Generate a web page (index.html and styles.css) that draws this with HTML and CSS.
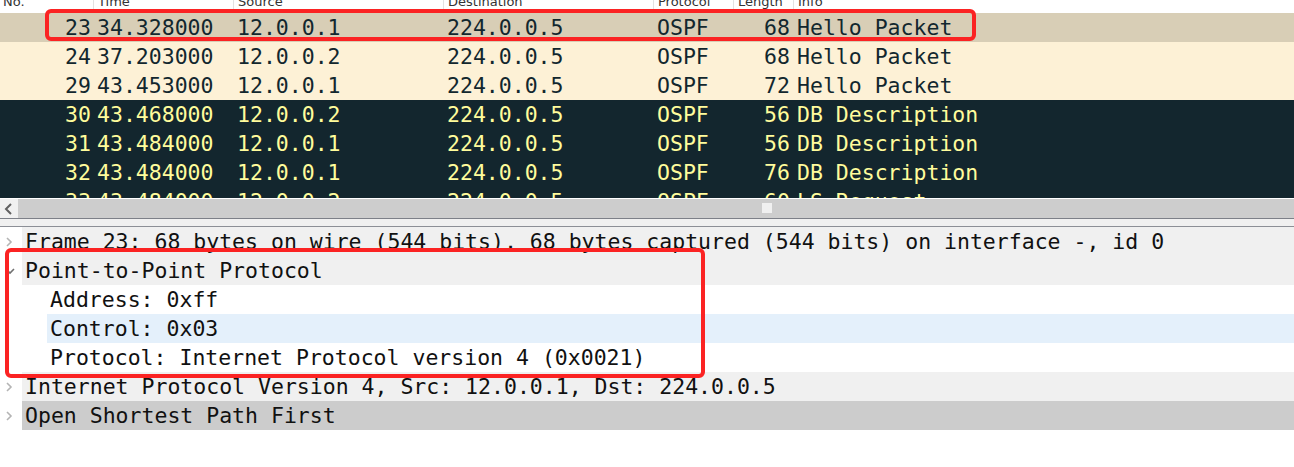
FILE: index.html
```html
<!DOCTYPE html>
<html lang="en">
<head>
    <meta charset="UTF-8">
    <title>Packet capture</title>
    <link rel="stylesheet" href="styles.css">
</head>
<body>

    <!-- Packet list -->
    <div class="packet-list">
        <div class="list-header">
            <div class="hcell"><span>No.</span></div>
            <div class="hcell"><span>Time</span></div>
            <div class="hcell"><span>Source</span></div>
            <div class="hcell"><span>Destination</span></div>
            <div class="hcell"><span>Protocol</span></div>
            <div class="hcell"><span>Length</span></div>
            <div class="hcell"><span>Info</span></div>
        </div>
        <div class="list-body">
            <div class="prow selected">
                <div class="num">23</div><div>34.328000</div><div>12.0.0.1</div><div>224.0.0.5</div><div>OSPF</div><div class="num len">68</div><div class="info">Hello Packet</div>
            </div>
            <div class="prow routing">
                <div class="num">24</div><div>37.203000</div><div>12.0.0.2</div><div>224.0.0.5</div><div>OSPF</div><div class="num len">68</div><div class="info">Hello Packet</div>
            </div>
            <div class="prow routing">
                <div class="num">29</div><div>43.453000</div><div>12.0.0.1</div><div>224.0.0.5</div><div>OSPF</div><div class="num len">72</div><div class="info">Hello Packet</div>
            </div>
            <div class="prow dark">
                <div class="num">30</div><div>43.468000</div><div>12.0.0.2</div><div>224.0.0.5</div><div>OSPF</div><div class="num len">56</div><div class="info">DB Description</div>
            </div>
            <div class="prow dark">
                <div class="num">31</div><div>43.484000</div><div>12.0.0.1</div><div>224.0.0.5</div><div>OSPF</div><div class="num len">56</div><div class="info">DB Description</div>
            </div>
            <div class="prow dark">
                <div class="num">32</div><div>43.484000</div><div>12.0.0.1</div><div>224.0.0.5</div><div>OSPF</div><div class="num len">76</div><div class="info">DB Description</div>
            </div>
            <div class="prow dark">
                <div class="num">33</div><div>43.484000</div><div>12.0.0.2</div><div>224.0.0.5</div><div>OSPF</div><div class="num len">60</div><div class="info">LS Request</div>
            </div>
        </div>
    </div>

    <!-- Horizontal scrollbar + splitter -->
    <div class="hscroll">
        <div class="scroll-btn">
            <svg width="10" height="12" viewBox="0 0 10 12"><path d="M7 1 L2 6 L7 11" fill="none" stroke="#606060" stroke-width="2"/></svg>
        </div>
        <div class="scroll-track">
            <div class="scroll-thumb"></div>
        </div>
    </div>
    <div class="splitter"></div>

    <!-- Packet details -->
    <div class="details">
        <div class="trow">
            <div class="toggle"><svg width="10" height="12" viewBox="0 0 10 12"><path d="M3 2 L7 6 L3 10" fill="none" stroke="#b4b4b4" stroke-width="1.6"/></svg></div>
            <div class="tlabel shade">Frame 23: 68 bytes on wire (544 bits), 68 bytes captured (544 bits) on interface -, id 0</div>
        </div>
        <div class="trow">
            <div class="toggle"><svg width="12" height="10" viewBox="0 0 12 10"><path d="M2 3 L6 7 L10 3" fill="none" stroke="#707070" stroke-width="1.6"/></svg></div>
            <div class="tlabel shade">Point-to-Point Protocol</div>
        </div>
        <div class="trow child">
            <div class="toggle"></div>
            <div class="tlabel">Address: 0xff</div>
        </div>
        <div class="trow child">
            <div class="toggle"></div>
            <div class="tlabel hover">Control: 0x03</div>
        </div>
        <div class="trow child">
            <div class="toggle"></div>
            <div class="tlabel">Protocol: Internet Protocol version 4 (0x0021)</div>
        </div>
        <div class="trow">
            <div class="toggle"><svg width="10" height="12" viewBox="0 0 10 12"><path d="M3 2 L7 6 L3 10" fill="none" stroke="#b4b4b4" stroke-width="1.6"/></svg></div>
            <div class="tlabel shade">Internet Protocol Version 4, Src: 12.0.0.1, Dst: 224.0.0.5</div>
        </div>
        <div class="trow">
            <div class="toggle"><svg width="10" height="12" viewBox="0 0 10 12"><path d="M3 2 L7 6 L3 10" fill="none" stroke="#b4b4b4" stroke-width="1.6"/></svg></div>
            <div class="tlabel focus">Open Shortest Path First</div>
        </div>
    </div>

    <!-- Red annotation boxes -->
    <div class="mark mark-row"></div>
    <div class="mark mark-tree"></div>

</body>
</html>
```

FILE: styles.css
```css
/* Reset */
* {
    margin: 0;
    padding: 0;
    box-sizing: border-box;
}

body {
    background-color: #ffffff;
    width: 1294px;
    height: 467px;
    overflow: hidden;
    position: relative;
    font-family: "DejaVu Sans Mono", "Liberation Mono", monospace;
    font-size: 21.5px;
    color: #111111;
}

/* Packet list */
.list-header,
.prow {
    display: grid;
    grid-template-columns: 93px 140px 210px 210px 80px 60px 1fr;
}

.list-header {
    height: 13px;
    overflow: hidden;
    background-color: #ffffff;
}

.hcell {
    border-left: 1px solid #e2e2e2;
    padding-left: 4px;
    font-family: "DejaVu Sans", "Liberation Sans", sans-serif;
    font-size: 13px;
    line-height: 13px;
    color: #333333;
    overflow: hidden;
}

.hcell:first-child {
    border-left: none;
    padding-left: 3px;
}

.hcell span {
    display: block;
    margin-top: -5px;
}

.list-body {
    height: 185px;
    overflow: hidden;
}

.prow {
    height: 29px;
    padding-top: 2px;
    line-height: 26px;
    white-space: pre;
}

.prow > div {
    padding-left: 4px;
    overflow: hidden;
}

.prow > .num {
    text-align: right;
    padding-left: 0;
    padding-right: 2px;
}

.prow > .len {
    padding-right: 3px;
}

.prow > .info {
    padding-left: 4px;
}

.selected {
    background-color: #d8ceb6;
    color: #12272e;
}

.routing {
    background-color: #fdf1d6;
    color: #12272e;
}

.dark {
    background-color: #13262e;
    color: #fffc9c;
}

/* Scrollbar */
.hscroll {
    display: flex;
    margin-top: 1px;
    height: 20px;
    border-bottom: 1px solid #7d8088;
}

.scroll-btn {
    width: 18px;
    background-color: #f0f0f0;
    display: flex;
    align-items: center;
    justify-content: center;
}

.scroll-track {
    flex: 1;
    background-color: #cdcdcd;
    padding: 4px 0 0 744px;
}

.scroll-thumb {
    width: 10px;
    height: 10px;
    background-color: #f0f0f0;
}

.splitter {
    height: 8px;
    background-color: #f0f0f0;
    border-bottom: 1px solid #8c8f96;
}

/* Packet details tree */
.trow {
    display: flex;
    height: 29px;
    line-height: 26px;
    white-space: pre;
}

.toggle {
    width: 22px;
    flex: none;
    display: flex;
    align-items: center;
    padding-left: 4px;
}

.trow.child .toggle {
    width: 47px;
}

.tlabel {
    flex: 1;
    padding-top: 2px;
    padding-left: 3px;
    color: #111111;
}

.shade {
    background-color: #f0f0f0;
}

.hover {
    background-color: #e4f0fb;
}

.focus {
    background-color: #cccccc;
}

/* Annotation overlays */
.mark {
    position: absolute;
    border: 4px solid #fb2323;
    border-radius: 6px;
}

.mark-row {
    left: 45px;
    top: 9px;
    width: 931px;
    height: 32px;
}

.mark-tree {
    left: 5px;
    top: 248px;
    width: 700px;
    height: 130px;
}
```
